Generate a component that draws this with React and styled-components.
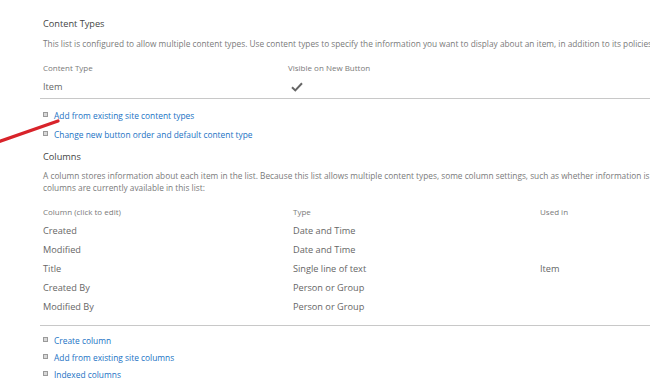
import React from "react";
import styled, { createGlobalStyle } from "styled-components";

const GlobalStyle = createGlobalStyle`
  html, body {
    margin: 0;
    padding: 0;
    background: #fff;
    overflow: hidden;
  }
  body {
    font-family: "Open Sans", "Noto Sans", sans-serif;
    color: #444;
  }
`;

const contentTypes = [{ name: "Item", visible: true }];

const columns = [
  { name: "Created", type: "Date and Time", usedIn: "" },
  { name: "Modified", type: "Date and Time", usedIn: "" },
  { name: "Title", type: "Single line of text", usedIn: "Item" },
  { name: "Created By", type: "Person or Group", usedIn: "" },
  { name: "Modified By", type: "Person or Group", usedIn: "" },
];

const CheckMark = () => (
  <svg width="12" height="10" viewBox="0 0 12 10">
    <path d="M1 5.2 L4.3 8.4 L11 1.2" fill="none" stroke="#666" strokeWidth="2" />
  </svg>
);

const App = () => {
  return (
    <Page>
      <GlobalStyle />
      <Arrow width="70" height="30" viewBox="0 0 70 30">
        <line x1="-2" y1="25" x2="58" y2="4" stroke="#d8232a" strokeWidth="3.2" strokeLinecap="round" />
      </Arrow>

      <Section>
        <Title>Content Types</Title>
        <Desc>
          This list is configured to allow multiple content types. Use content types to specify the
          information you want to display about an item, in addition to its policies, workflows, or other behaviors.
        </Desc>
        <Table $pad={2}>
          <HeadRow $cols="245px 1fr">
            <span>Content Type</span>
            <span>Visible on New Button</span>
          </HeadRow>
          {contentTypes.map((ct) => (
            <Row key={ct.name} $cols="245px 1fr">
              <span>{ct.name}</span>
              <Check>{ct.visible && <CheckMark />}</Check>
            </Row>
          ))}
        </Table>
        <LinkList $mt={7}>
          <LinkItem><Bullet /><Link href="#">Add from existing site content types</Link></LinkItem>
          <LinkItem><Bullet /><Link href="#">Change new button order and default content type</Link></LinkItem>
        </LinkList>
      </Section>

      <Section $gap={5}>
        <Title>Columns</Title>
        <Desc $lh={12} $mt={5}>
          A column stores information about each item in the list. Because this list allows multiple content types, some column settings, such as whether information is
          <br />
          columns are currently available in this list:
        </Desc>
        <Table $pad={9} $mt={8}>
          <HeadRow $cols="250px 247px 1fr">
            <span>Column (click to edit)</span>
            <span>Type</span>
            <span>Used in</span>
          </HeadRow>
          {columns.map((c) => (
            <Row key={c.name} $cols="250px 247px 1fr">
              <span>{c.name}</span>
              <span>{c.type}</span>
              <span>{c.usedIn}</span>
            </Row>
          ))}
        </Table>
        <LinkList $mt={6}>
          <LinkItem $pitch={17}><Bullet /><Link href="#">Create column</Link></LinkItem>
          <LinkItem $pitch={17}><Bullet /><Link href="#">Add from existing site columns</Link></LinkItem>
          <LinkItem $pitch={17}><Bullet /><Link href="#">Indexed columns</Link></LinkItem>
        </LinkList>
      </Section>
    </Page>
  );
};

const Page = styled.div`
  position: relative;
  width: 650px;
  height: 392px;
  padding: 16px 0 0 43px;
  box-sizing: border-box;
  overflow: hidden;
`;

const Arrow = styled.svg`
  position: absolute;
  left: 0;
  top: 117px;
`;

const Section = styled.div`
  display: flex;
  flex-direction: column;
  width: 640px;
  margin-top: ${(p) => p.$gap || 0}px;
`;

const Title = styled.div`
  font-size: 9.2px;
  line-height: 16px;
  color: #444;
`;

const Desc = styled.div`
  font-size: 8.3px;
  line-height: ${(p) => p.$lh || 16}px;
  margin-top: ${(p) => p.$mt ?? 4}px;
  color: #7a7a7a;
  white-space: nowrap;
`;

const Table = styled.div`
  display: flex;
  flex-direction: column;
  margin-top: ${(p) => p.$mt || 6}px;
  margin-left: -3px;
  padding: 0 0 ${(p) => p.$pad}px 3px;
  border-bottom: 1px solid #c8c8c8;
`;

const HeadRow = styled.div`
  display: grid;
  grid-template-columns: ${(p) => p.$cols};
  height: 19px;
  align-items: center;
  font-size: 8px;
  color: #7a7a7a;
`;

const Row = styled(HeadRow)`
  font-size: 9.2px;
  color: #666;
`;

const Check = styled.span`
  display: flex;
  align-items: center;
  padding-left: 3px;
`;

const LinkList = styled.ul`
  list-style: none;
  margin: ${(p) => p.$mt ?? 8}px 0 0;
  padding: 0;
`;

const LinkItem = styled.li`
  display: flex;
  align-items: center;
  height: ${(p) => p.$pitch || 19}px;
`;

const Bullet = styled.span`
  width: 3px;
  height: 3px;
  border: 1px solid #9a9a9a;
  background: #d8d8d8;
  margin-right: 6px;
  margin-top: -3px;
`;

const Link = styled.a`
  font-size: 8.4px;
  color: #1a72c4;
  text-decoration: none;
`;

export default App;
